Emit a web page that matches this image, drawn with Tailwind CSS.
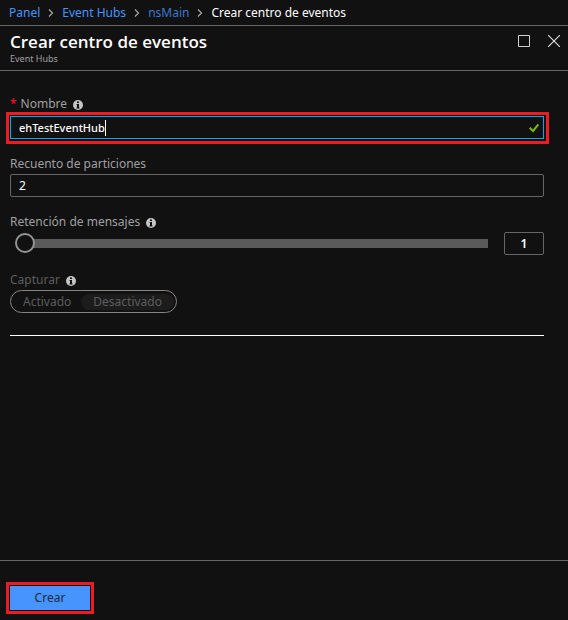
<!DOCTYPE html>
<html lang="es">
<head>
<meta charset="utf-8">
<meta name="viewport" content="width=device-width, initial-scale=1">
<title>Crear centro de eventos</title>
<script src="https://cdn.jsdelivr.net/npm/@tailwindcss/browser@4"></script>
</head>
<body class="flex min-h-screen flex-col bg-[#111111] font-['Noto_Sans','Open_Sans',sans-serif] text-[12px] leading-4 text-[#a0a0a0]">
  <svg class="hidden" aria-hidden="true">
    <symbol id="info" viewBox="0 0 10 10">
      <circle cx="5" cy="5" r="5" fill="#c4c4c4"/>
      <path d="M4 1.5h2v1.6H4zM3.6 4.1H6v3.4h.6v.9H3.4v-.9H4V5h-.4z" fill="#111"/>
    </symbol>
    <symbol id="chevron" viewBox="0 0 6 10">
      <path d="M1 1.5 4.5 5 1 8.5" fill="none" stroke="#a8a8a8" stroke-width="1.2"/>
    </symbol>
  </svg>

  <nav aria-label="Ruta" class="border-b border-[#666] px-[9px] pt-[5px] pb-1">
    <ol class="flex items-center gap-2 text-[#4894fe]">
      <li><a href="#">Panel</a></li>
      <li><svg class="h-2.5 w-1.5"><use href="#chevron"/></svg></li>
      <li><a href="#">Event Hubs</a></li>
      <li><svg class="h-2.5 w-1.5"><use href="#chevron"/></svg></li>
      <li><a href="#" class="text-[#3c78cc]">nsMain</a></li>
      <li><svg class="h-2.5 w-1.5"><use href="#chevron"/></svg></li>
      <li class="text-white" aria-current="page">Crear centro de eventos</li>
    </ol>
  </nav>

  <header class="flex items-start justify-between border-b border-[#666] pt-1.5 pr-2 pb-1 pl-2.5">
    <div>
      <h1 class="font-['Open_Sans','Noto_Sans',sans-serif] text-[17px] leading-5 font-semibold text-white">Crear centro de eventos</h1>
      <p class="text-[9px] leading-[14px]">Event Hubs</p>
    </div>
    <div class="flex gap-[18px] pt-[3px]">
      <button type="button" aria-label="Maximizar"><svg class="block size-3" viewBox="0 0 12 12"><path d="M.5.5h11v11H.5z" fill="none" stroke="#d0d0d0"/></svg></button>
      <button type="button" aria-label="Cerrar"><svg class="block size-3" viewBox="0 0 12 12"><path d="m0 0 12 12M12 0 0 12" fill="none" stroke="#e0e0e0" stroke-width="1.1"/></svg></button>
    </div>
  </header>

  <form id="create" class="flex-1 pr-6 pl-2.5">
    <div class="pt-[25px]">
      <div class="flex items-center gap-1.5">
        <label for="name"><span class="mr-1 font-semibold text-[#e81123]">*</span>Nombre</label>
        <svg class="mt-0.5 size-2.5"><use href="#info"/></svg>
      </div>
      <div class="-mr-[5px] -ml-1 border-3 border-[#ed1c24] p-px pr-0.5 pb-0.5">
        <div class="flex h-[23px] items-center border border-[#00abec] pr-1 pl-2 text-white">
          <input id="name" type="text" value="ehTestEventHub" class="text-[11px] font-medium caret-transparent outline-none [field-sizing:content]">
          <span class="h-4 w-px bg-white"></span>
          <svg class="ml-auto size-2.5" viewBox="0 0 10 10"><path d="M.7 4.8 4 8 9.4 1.5" fill="none" stroke="#7fba00" stroke-width="2"/></svg>
        </div>
      </div>
    </div>

    <div class="pt-3">
      <label for="partitions" class="block">Recuento de particiones</label>
      <input id="partitions" type="text" value="2" class="mt-0.5 block h-[23px] w-full rounded-xs border border-[#666] px-2 text-white outline-none">
    </div>

    <div class="pt-[17px]">
      <div class="flex items-center gap-1.5">
        <label for="retention">Retención de mensajes</label>
        <svg class="mt-0.5 size-2.5"><use href="#info"/></svg>
      </div>
      <div class="mt-0.5 flex items-center gap-4 pl-[5px]">
        <input id="retention" type="range" min="1" max="7" value="1" class="h-5 min-w-0 flex-1 appearance-none bg-transparent [&::-webkit-slider-runnable-track]:h-[9px] [&::-webkit-slider-runnable-track]:bg-linear-to-r [&::-webkit-slider-runnable-track]:from-transparent [&::-webkit-slider-runnable-track]:from-[10px] [&::-webkit-slider-runnable-track]:to-[#5a5a5a] [&::-webkit-slider-runnable-track]:to-[10px] [&::-webkit-slider-thumb]:-mt-[6px] [&::-webkit-slider-thumb]:size-5 [&::-webkit-slider-thumb]:appearance-none [&::-webkit-slider-thumb]:rounded-full [&::-webkit-slider-thumb]:border-2 [&::-webkit-slider-thumb]:border-[#949494] [&::-webkit-slider-thumb]:bg-[#111111]">
        <input type="text" value="1" aria-label="Días de retención" class="h-[23px] w-10 rounded-xs border border-[#666] text-center font-semibold text-white outline-none">
      </div>
    </div>

    <fieldset class="pt-[17px]">
      <legend class="contents">
        <span class="flex items-center gap-1.5 text-[#5c5c5c]">Capturar
          <svg class="mt-0.5 size-2.5"><use href="#info"/></svg>
        </span>
      </legend>
      <div class="mt-0.5 flex h-[23px] w-fit items-center rounded-full border border-[#858585] pr-0.5 text-[#5c5c5c]">
        <label class="pr-2.5 pl-3"><input type="radio" name="capture" class="sr-only" disabled>Activado</label>
        <label class="rounded-full bg-[#1c1c1c] px-3"><input type="radio" name="capture" class="sr-only" checked disabled>Desactivado</label>
      </div>
    </fieldset>

    <hr class="mt-[22px] border-white">
  </form>

  <footer class="border-t border-[#666] px-1.5 pt-[21px] pb-1.5">
    <div class="w-fit border-3 border-[#ed1c24] p-px">
      <button type="submit" form="create" class="block h-6 w-20 bg-[#4894fe] text-[#1b2a40]">Crear</button>
    </div>
  </footer>
</body>
</html>
